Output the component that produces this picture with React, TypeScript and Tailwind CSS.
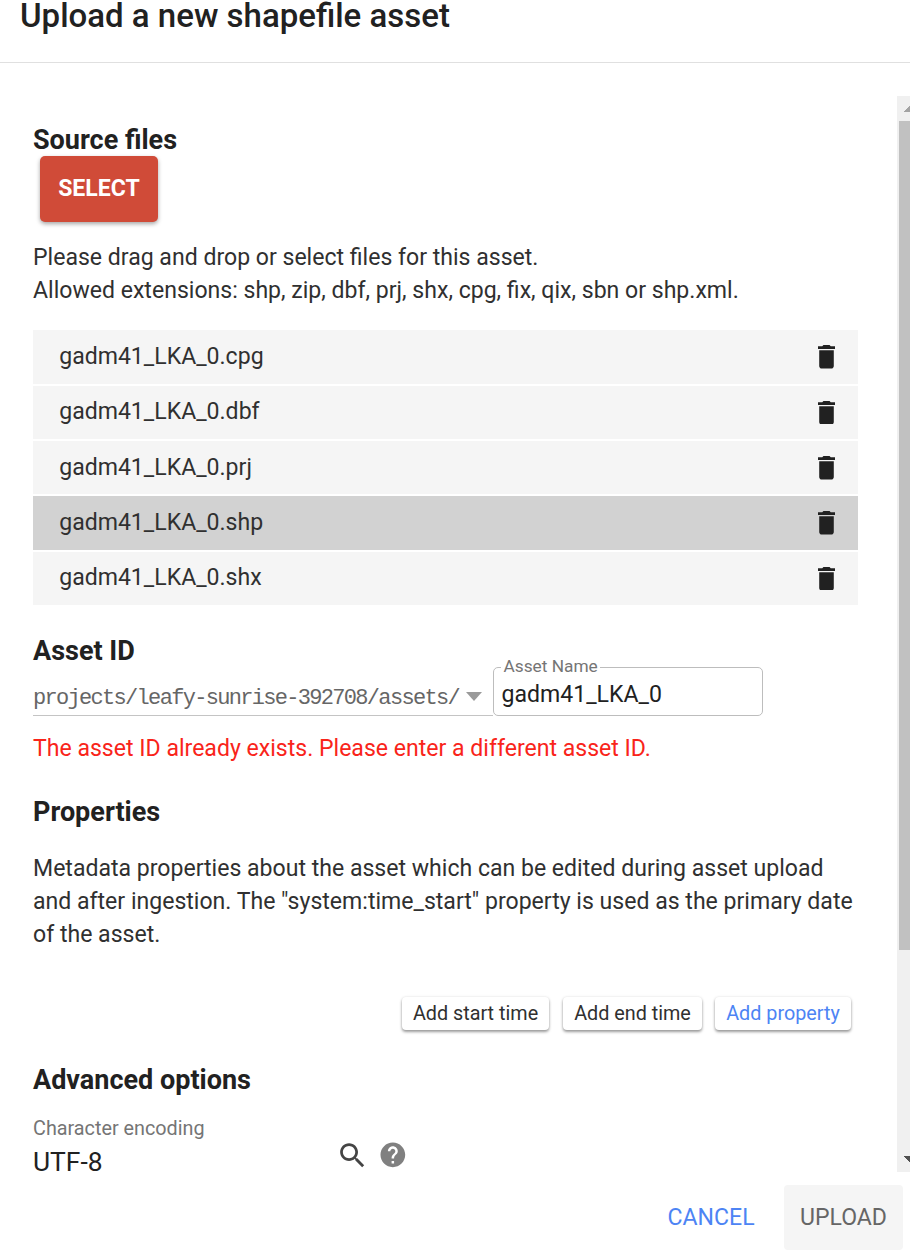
import type { ReactNode } from "react";

const files = [
  { name: "gadm41_LKA_0.cpg", active: false },
  { name: "gadm41_LKA_0.dbf", active: false },
  { name: "gadm41_LKA_0.prj", active: false },
  { name: "gadm41_LKA_0.shp", active: true },
  { name: "gadm41_LKA_0.shx", active: false },
];

function Heading({ children }: { children: ReactNode }) {
  return <h3 className="text-[27px] leading-[32px] font-bold text-[#212121]">{children}</h3>;
}

function TrashIcon() {
  return (
    <svg className="mt-[0.600px] h-[23.6px] w-[17px] text-[#212121]" viewBox="5 3 14 18" preserveAspectRatio="none" fill="currentColor">
      <path d="M6 19c0 1.1.9 2 2 2h8c1.1 0 2-.9 2-2V7H6v12zM19 4h-3.5l-1-1h-5l-1 1H5v2h14V4z" />
    </svg>
  );
}

function SearchIcon() {
  return (
    <svg className="size-[33px] text-[#444]" viewBox="0 0 24 24" fill="currentColor">
      <path d="M15.5 14h-.79l-.28-.27C15.41 12.59 16 11.11 16 9.5 16 5.91 13.09 3 9.5 3S3 5.91 3 9.5 5.91 16 9.5 16c1.61 0 3.09-.59 4.23-1.57l.27.28v.79l5 4.99L20.49 19l-4.99-5zm-6 0C7.01 14 5 11.99 5 9.5S7.01 5 9.5 5 14 7.01 14 9.5 11.99 14 9.5 14z" />
    </svg>
  );
}

function HelpIcon() {
  return (
    <svg className="size-[29.7px] text-[#808080]" viewBox="0 0 24 24" fill="currentColor">
      <path d="M12 2C6.48 2 2 6.48 2 12s4.48 10 10 10 10-4.48 10-10S17.52 2 12 2zm1 17h-2v-2h2v2zm2.07-7.75l-.9.92C13.45 12.9 13 13.5 13 15h-2v-.5c0-1.1.45-2.1 1.17-2.83l1.24-1.26c.37-.36.59-.86.59-1.41 0-1.1-.9-2-2-2s-2 .9-2 2H8c0-2.21 1.79-4 4-4s4 1.79 4 4c0 .88-.36 1.68-.93 2.25z" />
    </svg>
  );
}

function SmallButton({ children, className }: { children: ReactNode; className: string }) {
  return (
    <button
      className={`flex h-[33px] items-center justify-center rounded-[4px] bg-white text-[19.8px] whitespace-nowrap shadow-[0_2px_3px_rgba(0,0,0,0.38),0_0_3px_rgba(0,0,0,0.1)] ${className}`}
    >
      {children}
    </button>
  );
}

function Scrollbar() {
  return (
    <div className="flex w-[13px] flex-col bg-[#f0f0f0]">
      <svg className="h-[25px] w-[13px]" viewBox="0 0 13 25" shapeRendering="crispEdges">
        <path d="M6.500 16L14 8.500V16z" fill="#a3a3a3" />
      </svg>
      <div className="ml-[2px] h-[829px] bg-[#c1c1c1]" />
      <svg className="mt-auto h-[22px] w-[13px]" viewBox="0 0 13 22" shapeRendering="crispEdges">
        <path d="M6.500 6H14V13.500z" fill="#505050" />
      </svg>
    </div>
  );
}

export default function App() {
  return (
    <div className="flex h-[1250px] w-[910px] flex-col overflow-hidden bg-white font-['Roboto',sans-serif] text-[23.07px] text-[#303030]">
      <header className="h-[63px] border-b border-[#e0e0e0] pl-[20px]">
        <h2 className="text-[33px] leading-[31px] font-medium text-[#212121]">Upload a new shapefile asset</h2>
      </header>

      <div className="mt-[33px] flex h-[1076px]">
        <main className="w-[897px] pt-7 pr-[39px] pl-[33px]">
          <Heading>Source files</Heading>
          <button className="ml-[7px] flex h-[66px] w-[118px] items-center justify-center rounded-[5px] bg-[#d04b38] font-bold text-white shadow-[0_2px_4px_rgba(0,0,0,0.35)]">
            SELECT
          </button>
          <p className="mt-[18.6px] h-[66px] leading-[33px]">
            Please drag and drop or select files for this asset.
            <br />
            Allowed extensions: shp, zip, dbf, prj, shx, cpg, fix, qix, sbn or shp.xml.
          </p>

          <ul className="mt-[23.6px] flex flex-col gap-[1.95px]">
            {files.map((file) => (
              <li
                key={file.name}
                className={`flex h-[53.4px] items-center justify-between pr-[23px] pl-[26.2px] ${file.active ? "bg-[#d2d2d2]" : "bg-[#f5f5f5]"}`}
              >
                <span className="pb-[0.700px] leading-[33px]">{file.name}</span>
                <TrashIcon />
              </li>
            ))}
          </ul>

          <div className="mt-[30px]">
            <Heading>Asset ID</Heading>
          </div>
          <div className="flex h-[49px]">
            <div className="flex w-[460px] items-center border-b border-[#c4c4c4]">
              <span className="mt-[17px] w-[427px] font-['Liberation_Mono',monospace] text-[22px] leading-[30px] tracking-[-1.69px] whitespace-nowrap text-[#666]">
                projects/leafy-sunrise-392708/assets/
              </span>
              <svg className="mt-[12px] ml-[5.500px] h-[9px] w-4" viewBox="0 0 16 9">
                <path d="M0 0H16L8 9z" fill="#9a9a9a" />
              </svg>
            </div>
            <div className="relative flex w-[270px] items-center rounded-[5px] border border-[#bdbdbd] pt-[7px] pl-[7.500px]">
              <span className="absolute -top-[14px] left-[7px] bg-white px-[2.500px] text-[17.3px] leading-6 text-[#757575]">
                Asset Name
              </span>
              <span className="text-[#212121]">gadm41_LKA_0</span>
            </div>
          </div>
          <p className="mt-[16.4px] h-[33px] leading-[33px] text-[#f9241a]">
            The asset ID already exists. Please enter a different asset ID.
          </p>

          <div className="mt-[30.6px]">
            <Heading>Properties</Heading>
          </div>
          <p className="mt-[24.4px] h-[99px] leading-[33px]">
            Metadata properties about the asset which can be edited during asset upload and after ingestion. The
            "system:time_start" property is used as the primary date of the asset.
          </p>

          <div className="mt-[45.6px] flex justify-end pr-[7px]">
            <SmallButton className="mr-[14px] w-[147px]">Add start time</SmallButton>
            <SmallButton className="mr-[13px] w-[139px]">Add end time</SmallButton>
            <SmallButton className="w-[136px] text-[#4d84f4]">Add property</SmallButton>
          </div>

          <div className="mt-[34px]">
            <Heading>Advanced options</Heading>
          </div>
          <div className="mt-5 flex">
            <div className="w-[303px]">
              <p className="mt-[1px] text-[19.8px] leading-6 text-[#757575]">Character encoding</p>
              <p className="mt-[5px] text-[26.4px] leading-[33px] text-[#212121]">UTF-8</p>
            </div>
            <div className="mt-[23px] flex items-start">
              <SearchIcon />
              <div className="mt-[1px] ml-[9px]">
                <HelpIcon />
              </div>
            </div>
          </div>
        </main>
        <Scrollbar />
      </div>

      <footer className="mt-[13px] flex h-[65px] items-center justify-end pr-[7px]">
        <button className="mr-[29.4px] pt-[2px] text-[#4d84f4]">CANCEL</button>
        <button className="h-[65px] w-[119px] rounded-[4px] bg-[#f5f5f5] pt-[2px] text-[#666]">UPLOAD</button>
      </footer>
    </div>
  );
}
